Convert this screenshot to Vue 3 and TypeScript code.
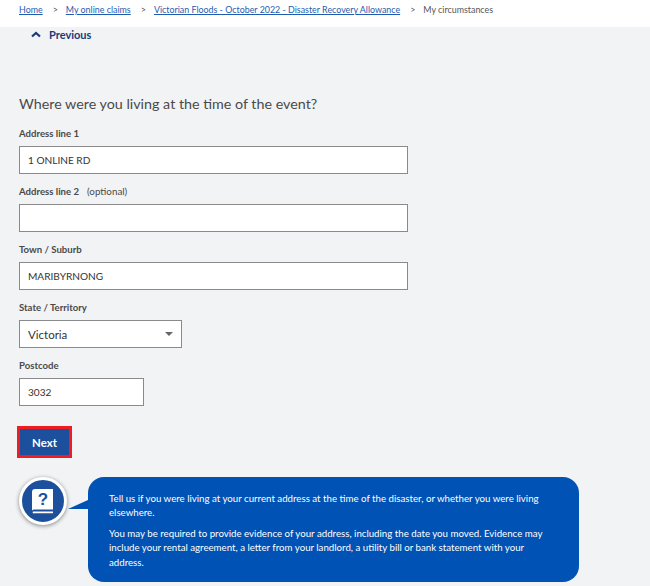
<script setup lang="ts">
import { ref } from 'vue'

type Campo = {
  etiqueta: string
  opcional?: boolean
  valor: string
  clase: string
}

const migas = ['Home', 'My online claims', 'Victorian Floods - October 2022 - Disaster Recovery Allowance']

const primeros = ref<Campo[]>([
  { etiqueta: 'Address line 1', valor: '1 ONLINE RD', clase: 'ancho' },
  { etiqueta: 'Address line 2', opcional: true, valor: '', clase: 'ancho' },
  { etiqueta: 'Town / Suburb', valor: 'MARIBYRNONG', clase: 'ancho' }
])

const postcode = ref('3032')
</script>

<template>
  <div class="pagina">
    <nav class="migas">
      <template v-for="miga in migas" :key="miga">
        <a href="#">{{ miga }}</a>
        <span class="sep">&gt;</span>
      </template>
      <span>My circumstances</span>
    </nav>

    <main class="contenido">
      <a class="previo" href="#">
        <svg width="10" height="7" viewBox="0 0 10 7"><path d="M1 5.5 5 2l4 3.5" fill="none" stroke="#173a7a" stroke-width="2.2" /></svg>
        <span>Previous</span>
      </a>

      <h2>Where were you living at the time of the event?</h2>

      <form class="formulario" @submit.prevent>
        <label v-for="campo in primeros" :key="campo.etiqueta" class="campo">
          <span class="etiqueta">{{ campo.etiqueta }}<small v-if="campo.opcional">(optional)</small></span>
          <input v-model="campo.valor" :class="campo.clase" type="text" />
        </label>

        <label class="campo">
          <span class="etiqueta">State / Territory</span>
          <span class="selector">
            <span>Victoria</span>
            <i class="flecha"></i>
          </span>
        </label>

        <label class="campo">
          <span class="etiqueta">Postcode</span>
          <input v-model="postcode" class="corto" type="text" />
        </label>

        <button type="submit">Next</button>
      </form>

      <section class="ayuda">
        <div class="icono">
          <svg width="22" height="25" viewBox="0 0 22 25">
            <path d="M3 0h18v20.5H3a3 3 0 0 0-3 1V3a3 3 0 0 1 3-3z" fill="#fff" />
            <path d="M1 22.6h20v1.6H2.4A1 1 0 0 1 1 22.6z" fill="#fff" />
            <text x="11" y="16" text-anchor="middle" class="interroga">?</text>
          </svg>
        </div>
        <div class="burbuja">
          <p>Tell us if you were living at your current address at the time of the disaster, or whether you were living elsewhere.</p>
          <p>You may be required to provide evidence of your address, including the date you moved. Evidence may include your rental agreement, a letter from your landlord, a utility bill or bank statement with your address.</p>
        </div>
      </section>
    </main>
  </div>
</template>

<style scoped>
.pagina {
  width: 650px;
  height: 586px;
  overflow: hidden;
  background-color: #f2f3f5;
  font-family: "Lato", "Noto Sans", sans-serif;
  color: #4a4a4a;
}

.migas {
  height: 27px;
  box-sizing: border-box;
  padding: 3px 0 0 19px;
  background-color: #ffffff;
  font-size: 8.9px;
  line-height: 14px;
  white-space: nowrap;
  color: #555;
}

.migas a {
  color: #1f5bb0;
}

.sep {
  margin: 0 8px 0 10px;
}

.contenido {
  padding: 0 0 0 19px;
}

.previo {
  display: flex;
  align-items: center;
  gap: 8px;
  margin-left: 12px;
  height: 14px;
  color: #173a7a;
  font-size: 11px;
  font-weight: 700;
  text-decoration: none;
}

h2 {
  margin: 53px 0 12px;
  font-size: 14.3px;
  line-height: 20px;
  font-weight: 400;
  color: #4a4a4a;
}

.formulario {
  display: flex;
  flex-direction: column;
  align-items: flex-start;
  gap: 10px;
}

.campo {
  display: flex;
  flex-direction: column;
  gap: 4px;
}

.etiqueta {
  font-size: 9.6px;
  line-height: 16px;
  font-weight: 700;
  color: #4a4a4a;
}

.etiqueta small {
  margin-left: 8px;
  font-size: 9.8px;
  line-height: 1;
  font-weight: 400;
}

input,
.selector {
  box-sizing: border-box;
  height: 28px;
  padding: 0 8px;
  border: 1px solid #8a8a8a;
  background-color: #ffffff;
  font-family: inherit;
  font-size: 10.1px;
  color: #333;
}

.ancho {
  width: 389px;
}

.corto {
  width: 125px;
}

.selector {
  display: flex;
  align-items: center;
  justify-content: space-between;
  width: 163px;
  font-size: 11.5px;
}

.flecha {
  width: 0;
  height: 0;
  border-left: 4px solid transparent;
  border-right: 4px solid transparent;
  border-top: 4px solid #666;
}

button {
  margin: 10px 0 0 -2px;
  width: 55px;
  height: 32px;
  border: 3px solid #ee1c25;
  background-color: #1c4f9c;
  color: #ffffff;
  font-family: inherit;
  font-size: 11.4px;
  font-weight: 700;
}

.ayuda {
  display: flex;
  align-items: flex-start;
  margin-top: 19px;
}

.icono {
  flex: none;
  display: flex;
  align-items: center;
  justify-content: center;
  box-sizing: border-box;
  width: 48px;
  height: 48px;
  border: 3px solid #ffffff;
  border-radius: 50%;
  background-color: #1c4f9c;
  box-shadow: 0 1px 4px rgba(0, 0, 0, 0.45);
  position: relative;
  z-index: 1;
}

.interroga {
  font-family: "Liberation Sans", sans-serif;
  font-size: 17px;
  font-weight: 700;
  fill: #1c4f9c;
}

.burbuja {
  position: relative;
  box-sizing: border-box;
  width: 491px;
  height: 105px;
  margin-left: 21px;
  padding: 14px 20px 0 21px;
  border-radius: 16px;
  background-color: #0052b4;
  color: #ffffff;
  font-size: 9.7px;
  line-height: 14.4px;
}

.burbuja::before {
  content: "";
  position: absolute;
  left: -20px;
  top: 23px;
  border-top: 9px solid transparent;
  border-right: 20px solid #0052b4;
}

.burbuja p {
  margin: 0 0 6px;
}
</style>
<style>
html,
body {
  margin: 0;
  background: #f2f3f5;
}
</style>
